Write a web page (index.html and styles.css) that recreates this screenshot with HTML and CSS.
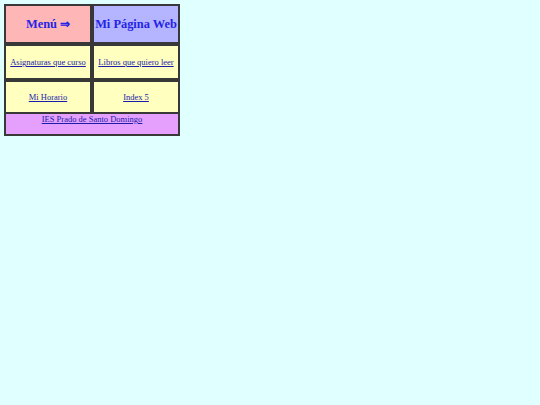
FILE: index.html
```html
<!DOCTYPE html>
<html lang="es">
<head>
<meta charset="utf-8">
<title>Mi Página Web</title>
<link rel="stylesheet" href="styles.css">
</head>
<body>
<div class="layout">
  <div class="cell menu"><h1 class="title">Menú ⇒</h1></div>
  <div class="cell brand"><h1 class="title">Mi Página Web</h1></div>
  <div class="cell item"><a href="#">Asignaturas que curso</a></div>
  <div class="cell item"><a href="#">Libros que quiero leer</a></div>
  <div class="cell item short"><a href="#">Mi Horario</a></div>
  <div class="cell item short"><a href="#">Index 5</a></div>
  <div class="cell footer"><a href="#">IES Prado de Santo Domingo</a></div>
</div>
</body>
</html>
```

FILE: styles.css
```css
html, body {
  margin: 0;
  padding: 0;
  background: #e0ffff;
}
body {
  padding: 4px;
  font-family: "Liberation Serif", "Times New Roman", serif;
}
.layout {
  display: grid;
  grid-template-columns: 88px 88px;
  grid-template-rows: 40px 36px 34px 22px;
  width: 176px;
}
.cell {
  box-sizing: border-box;
  border: 2px solid #383838;
  display: flex;
  align-items: center;
  justify-content: center;
  text-align: center;
}
.menu { background: #ffb6b6; }
.brand { background: #b4b4ff; }
.item { background: #ffffc0; }
.title {
  margin: 0;
  font-size: 12.4px;
  font-weight: bold;
  color: #2424e6;
  white-space: nowrap;
}
.cell a {
  font-size: 8.5px;
  color: #1c1cac;
  text-decoration: underline;
  white-space: nowrap;
}
.footer {
  grid-column: 1 / span 2;
  border-top: 0;
  background: #e4a0fc;
  align-items: flex-start;
  padding-top: 0;
}
```
